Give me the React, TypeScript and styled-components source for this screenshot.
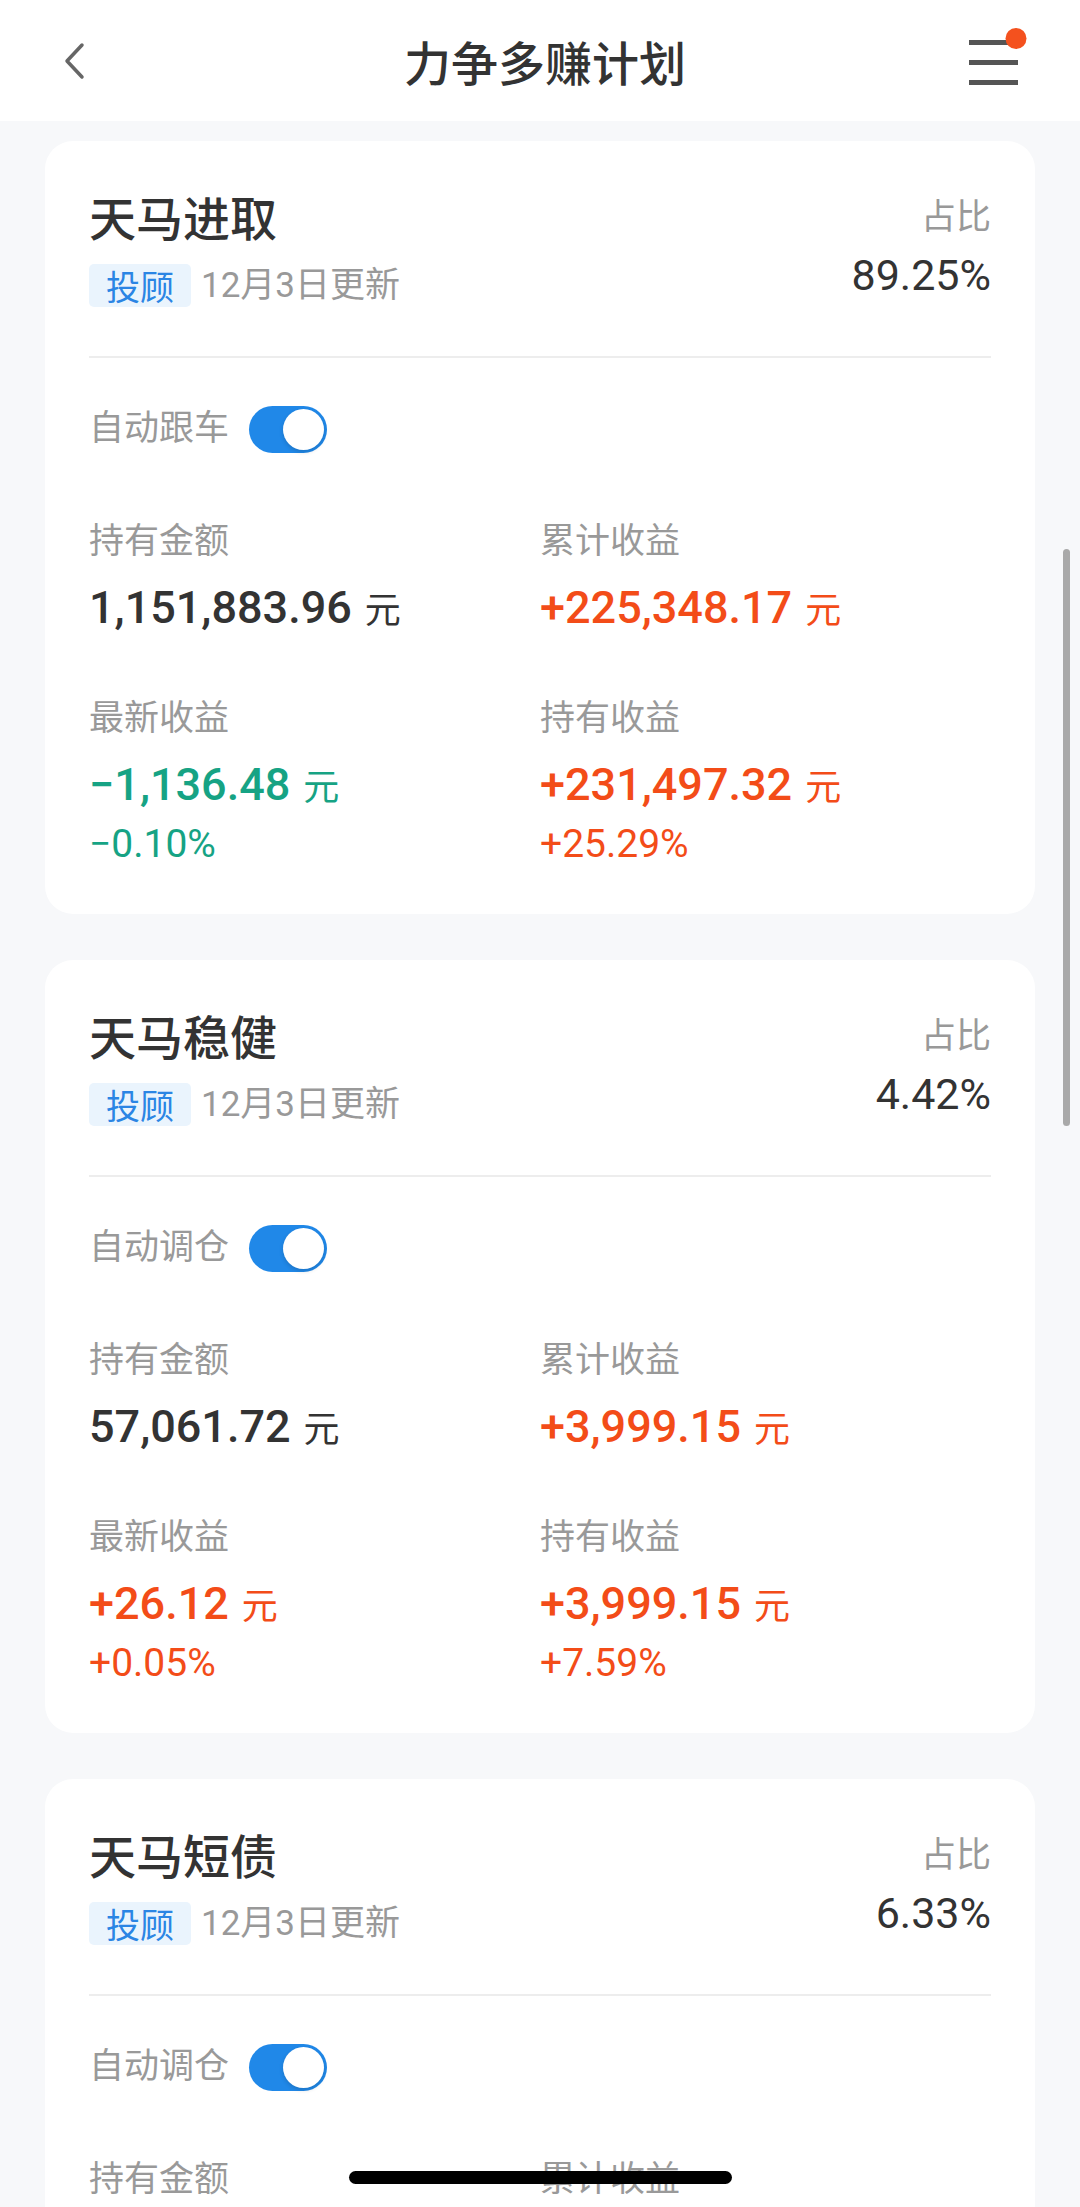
import React from 'react'
import styled, { createGlobalStyle } from 'styled-components'

const GlobalStyle = createGlobalStyle`
    html, body {
        margin: 0;
        padding: 0;
        background: #f7f8fa;
    }
    body {
        font-family: Roboto, "Noto Sans CJK SC", sans-serif;
        color: #333;
    }
`

const UP = '#f34c18'
const DOWN = '#16a384'
const PLAIN = '#333333'

const Screen = styled.div`
    position: relative;
    width: 1080px;
    height: 2207px;
    overflow: hidden;
    background: #f7f8fa;
`

const Header = styled.header`
    height: 121px;
    background: #fff;
    display: grid;
    grid-template-columns: 1fr auto 1fr;
    align-items: center;
    padding: 0 52px 0 62px;
    box-sizing: border-box;
`

const IconButton = styled.div<{ $end?: boolean }>`
    display: flex;
    align-items: center;
    justify-content: ${p => p.$end ? 'flex-end' : 'flex-start'};
`

const PageTitle = styled.h1`
    margin: 0;
    font-size: 47px;
    line-height: 60px;
    font-weight: 500;
    color: #333;
    font-family: "Noto Sans CJK SC", sans-serif;
`

const List = styled.div`
    display: flex;
    flex-direction: column;
    gap: 46px;
    padding: 20px 45px 0;
`

const Card = styled.section`
    background: #fff;
    border-radius: 28px;
    padding: 45px 44px 48px;
`

const Top = styled.div`
    display: flex;
    justify-content: space-between;
`

const TitleCol = styled.div`
    display: flex;
    flex-direction: column;
`

const Title = styled.div`
    font-family: "Noto Sans CJK SC", sans-serif;
    font-size: 47px;
    line-height: 60px;
    font-weight: 500;
    color: #333;
`

const Meta = styled.div`
    margin-top: 18px;
    height: 43px;
    display: flex;
    align-items: center;
    gap: 10px;
`

const Tag = styled.span`
    height: 43px;
    padding: 0 17px;
    border-radius: 5px;
    background: #eaf4fd;
    color: #2b85e4;
    font-family: "Noto Sans CJK SC", sans-serif;
    font-size: 34px;
    line-height: 43px;
`

const Muted = styled.span`
    color: #999;
    font-size: 35px;
    line-height: 48px;
`

const RatioCol = styled.div`
    padding-top: 8px;
    display: flex;
    flex-direction: column;
    align-items: flex-end;
`

const RatioValue = styled.div`
    margin-top: 8px;
    font-size: 43px;
    line-height: 50px;
    color: #333;
`

const Divider = styled.div`
    margin-top: 49px;
    height: 2px;
    background: #ededed;
`

const SwitchRow = styled.div`
    margin-top: 47px;
    display: flex;
    align-items: center;
    gap: 20px;
`

const Track = styled.div`
    position: relative;
    width: 78px;
    height: 47px;
    border-radius: 24px;
    background: #2088e8;
`

const Knob = styled.div`
    position: absolute;
    top: 3px;
    right: 3px;
    width: 41px;
    height: 41px;
    border-radius: 50%;
    background: #fff;
    box-shadow: 0 2px 4px rgba(0, 0, 0, 0.15);
`

const Stats = styled.div`
    margin-top: 65px;
    display: grid;
    grid-template-columns: 1fr 1fr;
    row-gap: 60px;
`

const Stat = styled.div`
    display: flex;
    flex-direction: column;
`

const Amount = styled.div<{ $color: string }>`
    margin-top: 13px;
    display: flex;
    align-items: baseline;
    color: ${p => p.$color};
    height: 56px;
    line-height: 56px;
`

const Digits = styled.span`
    font-size: 45px;
    font-weight: 500;
`

const Unit = styled.span`
    margin-left: 13px;
    font-family: "Noto Sans CJK SC", sans-serif;
    font-size: 36px;
`

const Percent = styled.div<{ $color: string }>`
    margin-top: 10px;
    font-size: 39px;
    line-height: 44px;
    color: ${p => p.$color};
`

const ScrollThumb = styled.div`
    position: absolute;
    left: 1063px;
    top: 549px;
    width: 7px;
    height: 577px;
    border-radius: 4px;
    background: #a9a9a9;
`

const HomeBar = styled.div`
    position: absolute;
    left: 349px;
    top: 2171px;
    width: 383px;
    height: 13px;
    border-radius: 7px;
    background: #000;
`

type Figure = { label: string, value: string, color: string, pct?: string }

interface Plan {
    name: string
    ratio: string
    toggle: string
    stats: Figure[]
}

const plans: Plan[] = [
    {
        name: '天马进取',
        ratio: '89.25%',
        toggle: '自动跟车',
        stats: [
            { label: '持有金额', value: '1,151,883.96', color: PLAIN },
            { label: '累计收益', value: '+225,348.17', color: UP },
            { label: '最新收益', value: '\u22121,136.48', color: DOWN, pct: '\u22120.10%' },
            { label: '持有收益', value: '+231,497.32', color: UP, pct: '+25.29%' }
        ]
    },
    {
        name: '天马稳健',
        ratio: '4.42%',
        toggle: '自动调仓',
        stats: [
            { label: '持有金额', value: '57,061.72', color: PLAIN },
            { label: '累计收益', value: '+3,999.15', color: UP },
            { label: '最新收益', value: '+26.12', color: UP, pct: '+0.05%' },
            { label: '持有收益', value: '+3,999.15', color: UP, pct: '+7.59%' }
        ]
    },
    {
        name: '天马短债',
        ratio: '6.33%',
        toggle: '自动调仓',
        stats: [
            { label: '持有金额', value: '6,920.11', color: PLAIN },
            { label: '累计收益', value: '+120.45', color: UP },
            { label: '最新收益', value: '+1.02', color: UP, pct: '+0.01%' },
            { label: '持有收益', value: '+120.45', color: UP, pct: '+1.77%' }
        ]
    }
]

const PlanCard = ({ plan }: { plan: Plan }) => (
    <Card>
        <Top>
            <TitleCol>
                <Title>{plan.name}</Title>
                <Meta>
                    <Tag>投顾</Tag>
                    <Muted>12月3日更新</Muted>
                </Meta>
            </TitleCol>
            <RatioCol>
                <Muted>占比</Muted>
                <RatioValue>{plan.ratio}</RatioValue>
            </RatioCol>
        </Top>
        <Divider />
        <SwitchRow>
            <Muted>{plan.toggle}</Muted>
            <Track><Knob /></Track>
        </SwitchRow>
        <Stats>
            {plan.stats.map(s => (
                <Stat key={s.label}>
                    <Muted>{s.label}</Muted>
                    <Amount $color={s.color}>
                        <Digits>{s.value}</Digits>
                        <Unit>元</Unit>
                    </Amount>
                    {s.pct && <Percent $color={s.color}>{s.pct}</Percent>}
                </Stat>
            ))}
        </Stats>
    </Card>
)

const App: React.FC = () => (
    <Screen>
        <GlobalStyle />
        <Header>
            <IconButton>
                <svg width="24" height="38" viewBox="0 0 24 38">
                    <path d="M20 3 L5 19 L20 35" fill="none" stroke="#666" strokeWidth="3.5" strokeLinecap="round" strokeLinejoin="round" />
                </svg>
            </IconButton>
            <PageTitle>力争多赚计划</PageTitle>
            <IconButton $end>
                <svg width="62" height="70" viewBox="0 0 62 70">
                    <rect x="3" y="14" width="49" height="5" fill="#555" />
                    <rect x="3" y="34" width="49" height="5" fill="#555" />
                    <rect x="3" y="54" width="49" height="5" fill="#555" />
                    <circle cx="50" cy="12.5" r="10.5" fill="#f4511e" />
                </svg>
            </IconButton>
        </Header>
        <List>
            {plans.map(p => <PlanCard key={p.name} plan={p} />)}
        </List>
        <ScrollThumb />
        <HomeBar />
    </Screen>
)

export default App
